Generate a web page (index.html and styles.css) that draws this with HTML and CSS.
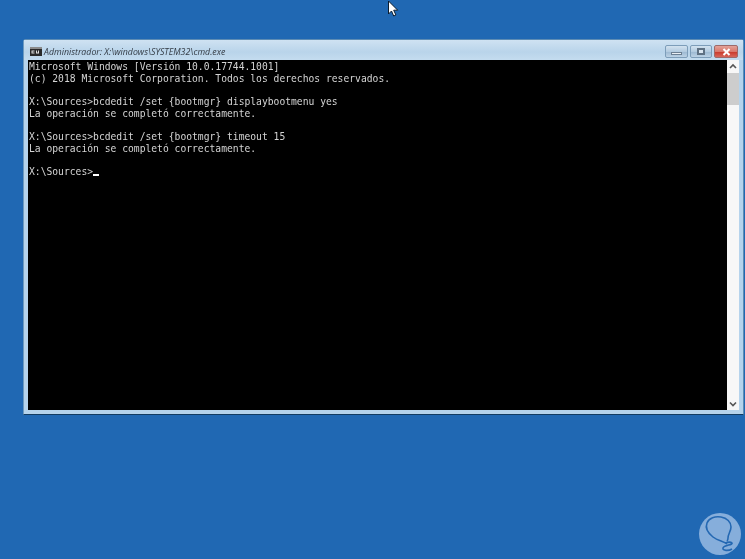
FILE: index.html
```html
<!DOCTYPE html>
<html lang="es">
<head>
<meta charset="utf-8">
<title>cmd.exe</title>
<link rel="stylesheet" href="styles.css">
</head>
<body>
<svg class="cursor" width="12" height="18" viewBox="0 0 12 18"><path d="M1.5 1v13l3-3 2.2 5 2.2-1-2.2-4.8h4z" fill="#fff" stroke="#0b1c2e" stroke-width="1"/></svg>
<main class="window">
  <header class="titlebar">
    <svg class="app-icon" width="12" height="9" viewBox="0 0 12 9"><rect width="12" height="9" fill="#2a2a2a"/><rect y="0" width="12" height="2" fill="#8b8b8b"/><path d="M1.5 3.5h3v1h-2v1h2v1h-3zM6 3.5h1v2h1v-2h1v3h-3z" fill="#e0e0e0"/></svg>
    <span class="title">Administrador: X:\windows\SYSTEM32\cmd.exe</span>
    <div class="controls">
      <div class="btn btn-min"><span class="glyph-min"></span></div>
      <div class="btn btn-max"><span class="glyph-max"></span></div>
      <div class="btn close"><svg width="9" height="8" viewBox="0 0 9 8"><path d="M1.5 1l6 6M7.5 1l-6 6" stroke="#fff" stroke-width="2"/></svg></div>
    </div>
  </header>
  <div class="client">
    <pre class="console">Microsoft Windows [Versión 10.0.17744.1001]
(c) 2018 Microsoft Corporation. Todos los derechos reservados.

X:\Sources&gt;bcdedit /set {bootmgr} displaybootmenu yes
La operación se completó correctamente.

X:\Sources&gt;bcdedit /set {bootmgr} timeout 15
La operación se completó correctamente.

X:\Sources&gt;<span class="caret"></span></pre>
    <div class="scrollbar">
      <svg class="arrow" width="12" height="13" viewBox="0 0 12 13"><path d="M3 8l3-3 3 3" fill="none" stroke="#555" stroke-width="1.6"/></svg>
      <div class="track"><div class="thumb"></div></div>
      <svg class="arrow" width="12" height="12" viewBox="0 0 12 12"><path d="M3 4.5l3 3 3-3" fill="none" stroke="#555" stroke-width="1.6"/></svg>
    </div>
  </div>
</main>
<div class="watermark">
  <svg width="42" height="42" viewBox="0 0 42 42"><circle cx="21" cy="21" r="21" fill="#86aedb"/><path d="M28 31c-3-3-9-3-14-7C9 20 6 15 8 10c2-5 8-7 14-6 6 1 10 5 10 10 0 4-3 7-3 11 0 2-1 3-1 3M26 30c3-1 6-1 7 0 1 2-8 2-9 5-1 3 6 3 9 1" fill="none" stroke="#2468b2" stroke-width="1.6"/></svg>
</div>
</body>
</html>
```
FILE: styles.css
```css
* { box-sizing: border-box; }
html, body { height: 100%; }
body {
  margin: 0;
  position: relative;
  overflow: hidden;
  background: #2068b3;
}
.cursor { position: absolute; left: 387px; top: 0; }
.window {
  position: absolute;
  left: 23px;
  top: 39px;
  width: 721px;
  height: 376px;
  display: flex;
  flex-direction: column;
  padding: 0 4px 4px 4px;
  background: #b5d3ec;
  border: 1px solid #5d8cb4;
  border-bottom-color: #123c63;
  border-left-color: #6d9ac0;
  border-radius: 3px 3px 0 0;
}
.titlebar {
  height: 20px;
  margin: 0 -4px 0 -4px;
  padding: 0 5px 0 6px;
  display: flex;
  align-items: center;
  background: linear-gradient(#cfe2f2, #b9d4ea 60%, #c4dcef);
}
.app-icon { flex: none; margin-top: 3px; }
.title {
  margin: 3px 0 0 2px;
  font: italic 8.8px/12px "Open Sans", sans-serif;
  color: #333b44;
  white-space: nowrap;
  filter: blur(0.3px);
}
.controls {
  margin-left: auto;
  margin-top: 5px;
  display: flex;
  align-items: flex-start;
  gap: 2px;
  align-self: flex-start;
}
.btn {
  height: 13px;
  display: flex;
  align-items: center;
  justify-content: center;
  border: 1px solid #7d9db9;
  border-radius: 2px;
  background: linear-gradient(#d3e2ef, #b3cbe0 50%, #9db9d2 55%, #bcd2e5);
}
.btn-min { width: 23px; }
.btn-max { width: 22px; }
.glyph-min { width: 11px; height: 3px; margin-top: 3px; background: #e8eef4; border: 1px solid #6c7f92; }
.glyph-max { width: 8px; height: 7px; background: #dbe6f0; border: 2px solid #5f7183; }
.close {
  width: 24px;
  background: linear-gradient(#e3a198, #d9786c 50%, #c93a2c 55%, #d8665a);
  border-color: #9d6a6a;
}
.client { flex: 1; min-height: 0; display: flex; }
.console {
  flex: 1;
  margin: 0;
  padding: 1px 0 0 1px;
  background: #000;
  color: #d4d4d4;
  font: 9.68px/11.65px "DejaVu Sans Mono", monospace;
  overflow: hidden;
  filter: blur(0.3px);
}
.caret {
  display: inline-block;
  width: 6px;
  height: 2px;
  background: #fff;
  vertical-align: -1px;
}
.scrollbar {
  width: 12px;
  flex: none;
  display: flex;
  flex-direction: column;
  background: #f7f7f7;
}
.arrow { flex: none; }
.track { flex: 1; }
.thumb { height: 32px; background: #cdcdcd; }
.watermark {
  position: absolute;
  left: 699px;
  top: 513px;
  width: 42px;
  height: 42px;
}
.watermark svg { display: block; }
```
